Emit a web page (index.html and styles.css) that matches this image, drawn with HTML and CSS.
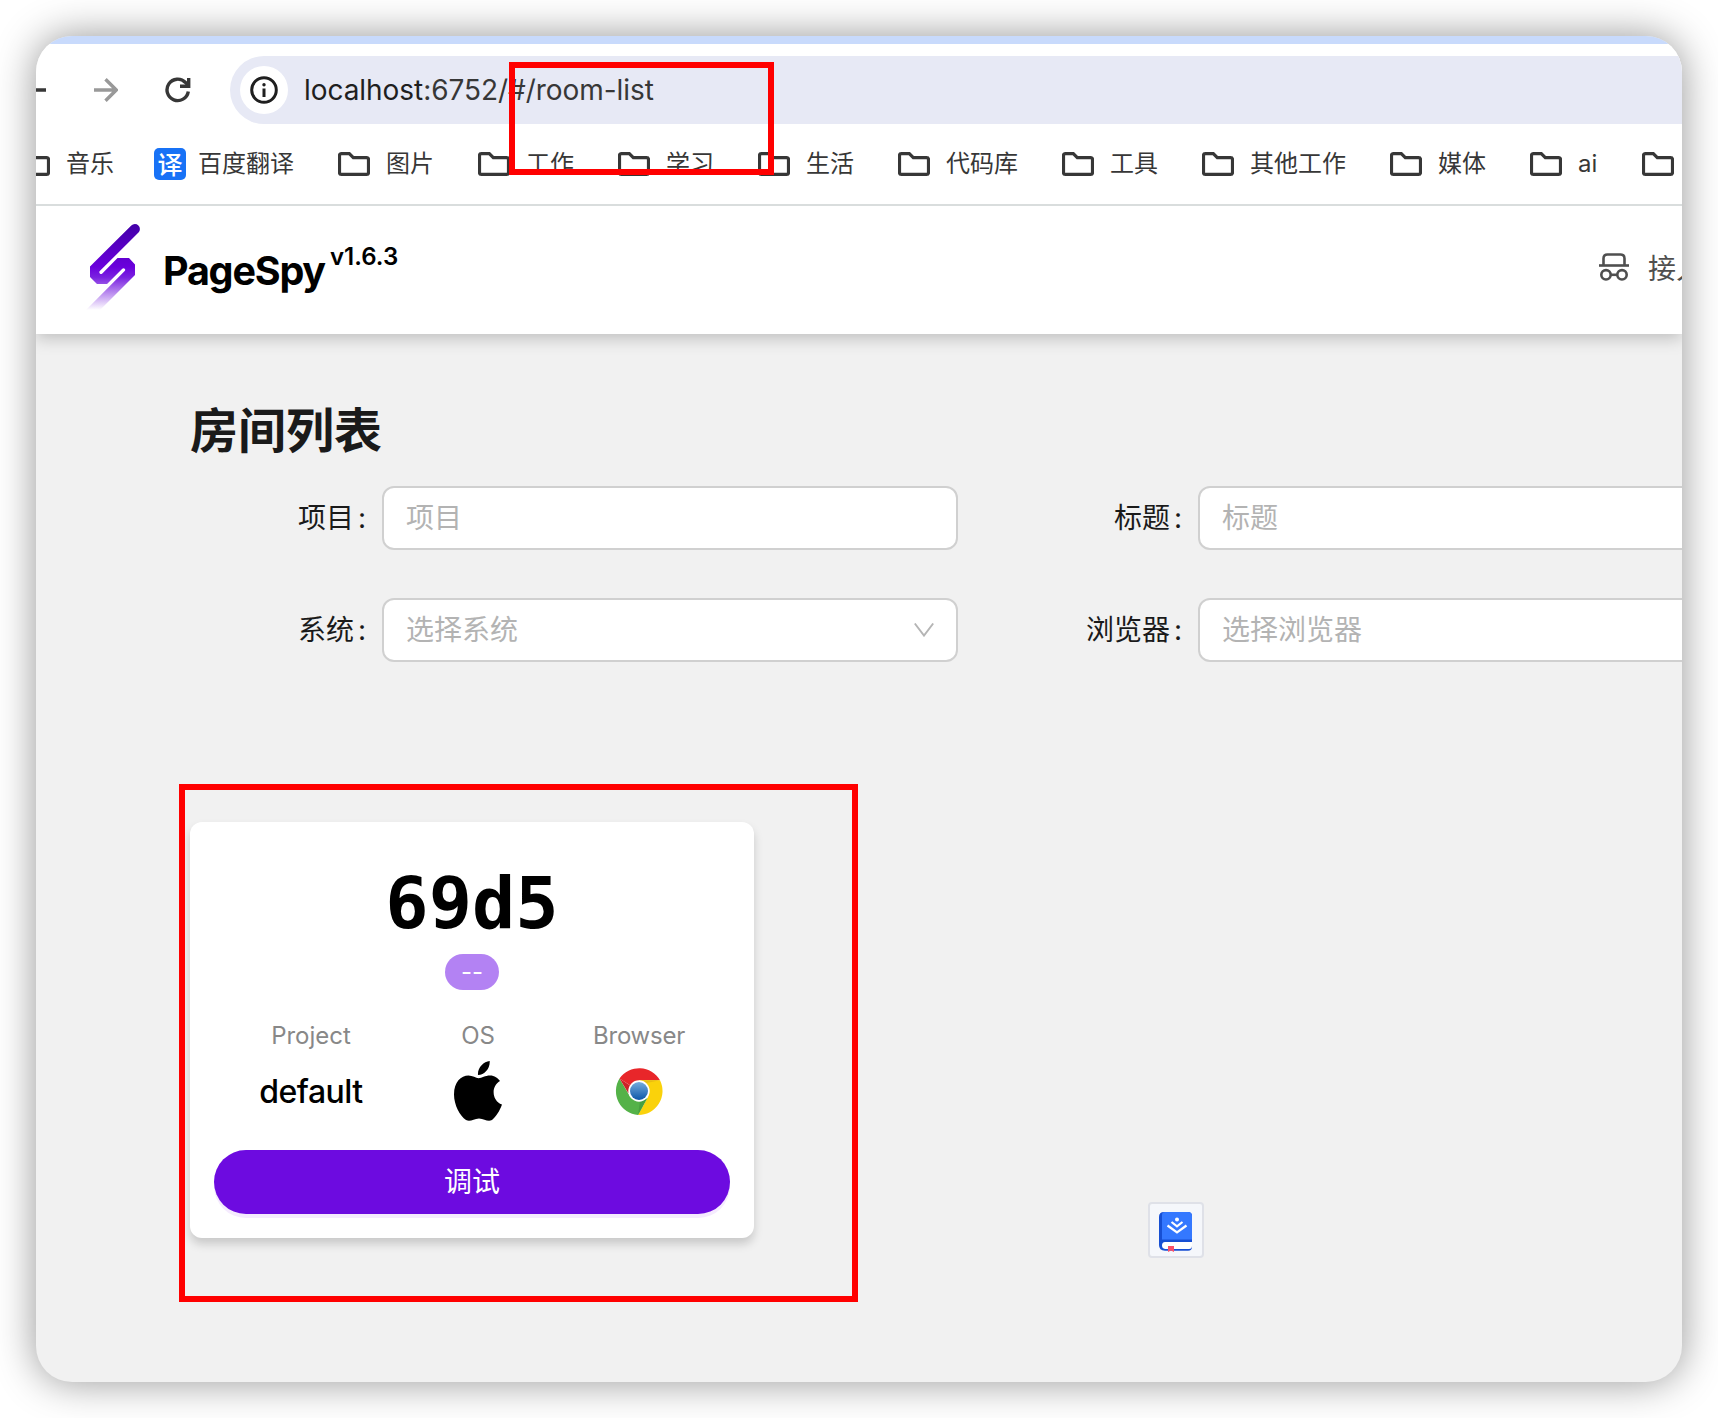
FILE: index.html
```html
<!DOCTYPE html>
<html lang="zh-CN">
<head>
<meta charset="utf-8">
<title>PageSpy</title>
<link rel="stylesheet" href="styles.css">
</head>
<body>
<svg class="defs" width="0" height="0" aria-hidden="true">
  <symbol id="folder" viewBox="0 0 32 24">
    <path d="M3.500 1.600H11.300L15.300 5.600H28.500Q30.500 5.600 30.500 7.600V20.400Q30.500 22.400 28.500 22.400H3.500Q1.500 22.400 1.500 20.400V3.600Q1.500 1.600 3.500 1.600Z" fill="none" stroke="#373737" stroke-width="3.200"/>
  </symbol>
</svg>
<div class="window">
  <div class="tabstrip"></div>
  <div class="toolbar">
    <svg class="nav back" width="24" height="24" viewBox="0 0 24 24"><path d="M24 12H2M12.500 1.500L2 12l10.500 10.500" fill="none" stroke="#373737" stroke-width="3.400"/></svg>
    <svg class="nav forward" width="24" height="24" viewBox="0 0 24 24"><path d="M0 12H22M11.500 1.200L22.300 12L11.500 22.800" fill="none" stroke="#999" stroke-width="3.400"/></svg>
    <svg class="nav reload" width="26" height="26" viewBox="0 0 26 26"><path d="M23.300 14.500A10.700 10.700 0 1 1 20.500 5.500L23 8.500" fill="none" stroke="#373737" stroke-width="3.400"/><path d="M23.700 1V9.300H15" fill="none" stroke="#373737" stroke-width="3.400"/></svg>
    <div class="omnibox">
      <span class="site-info"><svg width="28" height="28" viewBox="0 0 28 28"><circle cx="14" cy="14" r="12.300" fill="none" stroke="#1f1f1f" stroke-width="3"/><circle cx="14" cy="8.700" r="1.700" fill="#1f1f1f"/><path d="M14 12.500V21" stroke="#1f1f1f" stroke-width="3"/></svg></span>
      <span class="url"><span class="host">localhost</span>:6752/#/room-list</span>
    </div>
  </div>
  <div class="bookmarks">
    <span class="bm"><svg class="folder"><use href="#folder"/></svg>音乐</span>
    <span class="bm baidu"><i class="yi">译</i>百度翻译</span>
    <span class="bm"><svg class="folder"><use href="#folder"/></svg>图片</span>
    <span class="bm"><svg class="folder"><use href="#folder"/></svg>工作</span>
    <span class="bm"><svg class="folder"><use href="#folder"/></svg>学习</span>
    <span class="bm"><svg class="folder"><use href="#folder"/></svg>生活</span>
    <span class="bm"><svg class="folder"><use href="#folder"/></svg>代码库</span>
    <span class="bm"><svg class="folder"><use href="#folder"/></svg>工具</span>
    <span class="bm"><svg class="folder"><use href="#folder"/></svg>其他工作</span>
    <span class="bm"><svg class="folder"><use href="#folder"/></svg>媒体</span>
    <span class="bm ai"><svg class="folder"><use href="#folder"/></svg>ai</span>
    <span class="bm"><svg class="folder"><use href="#folder"/></svg></span>
  </div>
  <header class="header">
    <svg class="logo" width="56" height="88" viewBox="85 223 56 88">
      <defs><linearGradient id="lg" x1="0" y1="224" x2="0" y2="310" gradientUnits="userSpaceOnUse"><stop offset="0" stop-color="#4300a8"/><stop offset=".5" stop-color="#6a00dc"/><stop offset=".62" stop-color="#7a22e0"/><stop offset="1" stop-color="#7a22e0" stop-opacity="0"/></linearGradient></defs>
      <path d="M131.300 225.500L90 266.500V277L97 284H107L122.300 268.700Q123.500 267.700 124.700 268.700Q125.700 269.900 124.700 271.100L86 310H100L135 275V264.500L129 258H117.500L102.300 273.500Q101 274.700 99.800 273.500Q98.800 272.300 99.800 271.100L138.500 232.500A5 5 0 0 0 131.300 225.500Z" fill="url(#lg)"/>
    </svg>
    <span class="brand">PageSpy</span><span class="version">v1.6.3</span>
    <div class="menu">
      <svg width="30" height="28" viewBox="0 0 30 28"><g fill="none" stroke="#4f4f4f" stroke-width="2.600"><path d="M4.500 12V5.500Q4.500 1.500 8.500 1.500H21.500Q25.500 1.500 25.500 5.500V12"/><path d="M0 12.500H30"/><circle cx="7" cy="21.800" r="4.700"/><circle cx="23" cy="21.800" r="4.700"/><path d="M11.500 21.800H18.500"/></g></svg>
      <span>接入</span>
    </div>
  </header>
  <main class="content">
    <h1 class="title">房间列表</h1>
    <div class="form">
      <label class="label">项目<b>:</b></label><div class="field">项目</div>
      <label class="label">标题<b>:</b></label><div class="field">标题</div>
      <label class="label">系统<b>:</b></label><div class="field">选择系统<svg width="20" height="14" viewBox="0 0 20 14"><path d="M.8 .5L10 12.600L19.200 .5" fill="none" stroke="#b5b5b5" stroke-width="1.900"/></svg></div>
      <label class="label">浏览器<b>:</b></label><div class="field">选择浏览器</div>
    </div>
    <section class="card">
      <div class="code">69d5</div>
      <div class="badge">--</div>
      <div class="facts">
        <div class="fact project"><span class="key">Project</span><span class="value">default</span></div>
        <div class="fact os"><span class="key">OS</span><span class="value"><svg width="48" height="60" viewBox="0 0 48 60"><path d="M35.700 0C36.200 7.200 30.600 13.900 24 14C23.300 7 29.500 .6 35.700 0ZM24.500 17.200C28 17.200 31 14.500 36 14.500C40.500 14.500 44 17 46 20C36.500 25.500 38 40 48 43.500C46 49.500 41.500 56.500 38 59C33.500 61.500 30.500 57.400 25 57.400C19.500 57.400 16.500 61.500 12 59C6 55 0 44 0 33.500C0 21 7 14.500 14.500 14.500C18.500 14.500 22 17.200 24.500 17.200Z"/></svg></span></div>
        <div class="fact browser"><span class="key">Browser</span><span class="value"><svg width="48" height="48" viewBox="0 0 48 48">
          <defs><linearGradient id="cb" x1="0" y1="0" x2="0" y2="1"><stop offset="0" stop-color="#76abdd"/><stop offset="1" stop-color="#0c57a8"/></linearGradient></defs>
          <path d="M24 24L4.500 11.500A24 24 0 0 1 45 13.300H24Z" fill="#e8262a"/>
          <path d="M24 24V13.300H45A24 24 0 0 1 23 48L33 30Z" fill="#fad20b"/>
          <path d="M45 13.300L29 16.500L24 13.300Z" fill="#e9bd10"/>
          <path d="M24 24L33 29L23 48A24 24 0 0 1 4.500 11.500L15 29.500Z" fill="#54b248"/>
          <path d="M4.500 11.500L13.500 26.500L16 19Z" fill="#cd2227"/>
          <path d="M23 48L32.500 31L25 34Z" fill="#47a040"/>
          <circle cx="24" cy="24" r="10.700" fill="#fff"/><circle cx="24" cy="24" r="9" fill="url(#cb)"/>
        </svg></span></div>
      </div>
      <button class="debug">调试</button>
    </section>
  </main>
</div>
<div class="mark mark-url"></div>
<div class="mark mark-card"></div>
<div class="dict"><svg width="34" height="40" viewBox="0 0 34 40">
  <path d="M5 0H29Q33 0 33 4V35Q33 38.700 29 38.700H6Q0 38.700 0 33V5Q0 0 5 0Z" fill="#174fd3"/>
  <path d="M6 0H29Q33 0 33 4V27.500H3V3Q3 0 6 0Z" fill="#3478ff"/>
  <path d="M6 30H33V34Q33 37 30 37H6Q3 36.500 3 33.500Q3 30 6 30Z" fill="#fff"/>
  <path d="M9 34H15V40L12 38.500L9 40Z" fill="#f9506a"/>
  <circle cx="18" cy="7.500" r="2" fill="#fff"/><path d="M12.500 10L18 14.300L23.500 10M8.500 13.500L18 20.500L27.500 13.500" fill="none" stroke="#fff" stroke-width="2.200"/>
</svg></div>
</body>
</html>
```
FILE: styles.css
```css
* { box-sizing: border-box; }
body {
  margin: 0;
  width: 1718px;
  height: 1418px;
  padding: 36px;
  position: relative;
  overflow: hidden;
  background: #fff;
  font-family: Inter, "Noto Sans CJK SC", sans-serif;
}
.defs { position: absolute; }
svg { display: block; flex: none; }
.window {
  width: 1646px;
  height: 1346px;
  border-radius: 36px;
  overflow: hidden;
  background: #f1f1f1;
  box-shadow: 0 0 40px rgba(0, 0, 0, .42);
}
.tabstrip { height: 8px; background: #c8dafc; }
.toolbar {
  height: 92px;
  padding-top: 12px;
  display: flex;
  background: #fff;
}
.nav { margin-top: 22px; }
.back { margin-left: -14px; }
.forward { margin-left: 48px; }
.reload { margin: 21px 39px 0 47px; }
.omnibox {
  flex: 1;
  height: 68px;
  padding-left: 10px;
  border-radius: 34px 0 0 34px;
  background: #e7e9f5;
  display: flex;
  align-items: center;
}
.site-info {
  width: 48px;
  height: 48px;
  margin-right: 16px;
  border-radius: 50%;
  background: #fff;
  display: flex;
  align-items: center;
  justify-content: center;
}
.url { font-size: 28px; line-height: 40px; letter-spacing: -.05px; color: #373737; white-space: nowrap; }
.host { color: #1f1f1f; }
.bookmarks {
  height: 70px;
  padding-bottom: 12px;
  margin: 0;
  border-bottom: 2px solid #d9dddd;
  background: #fff;
  display: flex;
  align-items: center;
  gap: 44px;
  overflow: hidden;
}
.bm {
  display: flex;
  align-items: center;
  gap: 16px;
  flex: none;
  font-size: 24px;
  line-height: 32px;
  color: #373737;
}
.bm:first-child { margin-left: -18px; }
.folder { width: 32px; height: 24px; }
.baidu { gap: 12px; margin-left: -4px; }
.ai { width: 68px; }
.yi {
  width: 32px;
  height: 32px;
  border-radius: 5px;
  background: #1872f6;
  color: #fff;
  font: 500 25px/31px "Noto Sans CJK SC", sans-serif;
  text-align: center;
}
.header {
  position: relative;
  height: 128px;
  padding: 17px 0 0 49px;
  display: flex;
  background: #fff;
  box-shadow: 0 4px 16px rgba(0, 0, 0, .22);
  clip-path: inset(0 0 -40px 0);
}
.brand {
  margin: 24px 0 0 22px;
  width: 167px;
  font-size: 39.5px;
  line-height: 48px;
  font-weight: 650;
  letter-spacing: -1.2px;
}
.version { margin-top: 18px; font-size: 24px; line-height: 32px; font-weight: 600; }
.menu {
  margin: 25px -22px 0 auto;
  display: flex;
  gap: 19px;
  font-size: 28px;
  line-height: 42px;
  color: #4f4f4f;
  white-space: nowrap;
}
.menu svg { margin-top: 5px; }
.content { padding: 62px 0 0 154px; }
.title { margin: 0; font-size: 48px; line-height: 70px; font-weight: 700; color: #1a1a1a; }
.form {
  width: 1560px;
  margin-top: 20px;
  display: grid;
  grid-template-columns: 192px 576px 240px 576px;
  grid-auto-rows: 64px;
  row-gap: 48px;
}
.label {
  padding-right: 16px;
  display: flex;
  justify-content: flex-end;
  font-size: 28px;
  line-height: 64px;
  color: #1a1a1a;
}
.label b { width: 12px; text-align: right; font-weight: 400; }
.field {
  padding: 0 22px;
  border: 2px solid #d0d0d0;
  border-radius: 12px;
  background: #fff;
  display: flex;
  align-items: center;
  justify-content: space-between;
  font-size: 28px;
  line-height: 60px;
  color: #b3b3b3;
}
.card {
  width: 564px;
  height: 416px;
  margin-top: 160px;
  padding: 24px;
  border-radius: 12px;
  background: #fff;
  box-shadow: 0 6px 10px rgba(0, 0, 0, .17);
  display: flex;
  flex-direction: column;
  align-items: center;
}
.code {
  margin-top: 15px;
  font: 700 72px/84px "DejaVu Sans Mono", monospace;
}
.badge {
  width: 54px;
  height: 36px;
  margin-top: 9px;
  border-radius: 18px;
  background: #b382f3;
  color: #fff;
  font-size: 24px;
  line-height: 35px;
  text-align: center;
}
.facts { align-self: stretch; display: flex; margin-top: 30px; height: 130px; }
.fact { display: flex; flex-direction: column; align-items: center; }
.project { width: 194px; }
.os { width: 140px; }
.browser { width: 182px; }
.key { font-size: 24px; line-height: 32px; color: #888; }
.browser .key { letter-spacing: -.25px; }
.value {
  height: 78px;
  display: flex;
  align-items: center;
  font-size: 32px;
  font-weight: 500;
  letter-spacing: -.5px;
}
.debug {
  width: 516px;
  height: 64px;
  border: 0;
  border-radius: 32px;
  background: #6d0be0;
  box-shadow: 0 4px 0 #f5ebfe;
  color: #fff;
  font: 400 28px/60px "Noto Sans CJK SC", sans-serif;
  padding: 0 0 4px;
}
.mark { position: absolute; border: 6px solid #f00; }
.mark-url { left: 509px; top: 62px; width: 265px; height: 113px; }
.mark-card { left: 179px; top: 784px; width: 679px; height: 518px; }
.dict {
  position: absolute;
  left: 1148px;
  top: 1202px;
  width: 56px;
  height: 56px;
  padding: 8px 0 0 9px;
  border: 2px solid #dfe1e8;
  border-radius: 4px;
  background: #f5f7fb;
}
```
